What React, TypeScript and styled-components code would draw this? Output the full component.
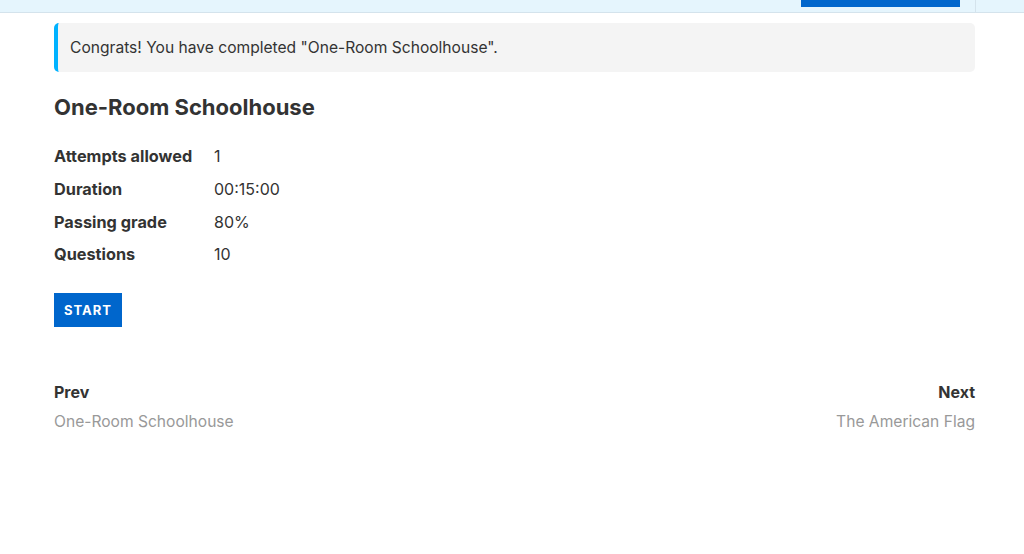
import React from 'react';
import styled, { createGlobalStyle } from 'styled-components';

const GlobalStyle = createGlobalStyle`
  body {
    margin: 0;
    background: #fff;
    font-family: Inter, "Noto Sans", sans-serif;
    color: #333;
  }
`;

const details = [
  { label: 'Attempts allowed', value: '1' },
  { label: 'Duration', value: '00:15:00' },
  { label: 'Passing grade', value: '80%' },
  { label: 'Questions', value: '10' },
];

export default function App() {
  return (
    <>
      <GlobalStyle />
      <TopBar>
        <TopButton />
        <Divider />
      </TopBar>
      <Main>
        <Notice>Congrats! You have completed "One-Room Schoolhouse".</Notice>
        <Title>One-Room Schoolhouse</Title>
        <InfoTable>
          {details.map((d) => (
            <React.Fragment key={d.label}>
              <Label>{d.label}</Label>
              <Value>{d.value}</Value>
            </React.Fragment>
          ))}
        </InfoTable>
        <StartButton>START</StartButton>
        <Nav>
          <NavItem align="left">
            <NavHead>Prev</NavHead>
            <NavLink>One-Room Schoolhouse</NavLink>
          </NavItem>
          <NavItem align="right">
            <NavHead>Next</NavHead>
            <NavLink>The American Flag</NavLink>
          </NavItem>
        </Nav>
      </Main>
    </>
  );
}

const TopBar = styled.header`
  height: 12px;
  background: #e5f5fd;
  border-bottom: 1px solid #d4e3ec;
  display: flex;
  justify-content: flex-end;
  align-items: flex-start;
`;

const TopButton = styled.div`
  width: 159px;
  height: 7px;
  background: #0066cc;
  margin-right: 15px;
`;

const Divider = styled.div`
  width: 1px;
  height: 12px;
  background: #d4e3ec;
  margin-right: 48px;
`;

const Main = styled.main`
  width: 921px;
  margin-left: 54px;
  padding-top: 10px;
`;

const Notice = styled.div`
  background: #f4f4f4;
  border-left: 4px solid #00b2ff;
  border-radius: 5px;
  padding: 0 12px;
  height: 49px;
  display: flex;
  align-items: center;
  font-size: 15.6px;
  color: #333;
`;

const Title = styled.h1`
  margin: 21px 0 0;
  font-size: 22px;
  line-height: 28px;
  font-weight: 700;
  color: #333;
`;

const InfoTable = styled.div`
  display: grid;
  grid-template-columns: 160px auto;
  grid-auto-rows: 32.7px;
  align-items: center;
  margin-top: 19px;
  font-size: 16px;
`;

const Label = styled.div`
  font-weight: 700;
  font-size: 16.3px;
  color: #333;
`;

const Value = styled.div`
  color: #333;
`;

const StartButton = styled.button`
  margin-top: 22px;
  height: 34px;
  width: 68px;
  padding: 0;
  border: none;
  background: #0066cc;
  color: #fff;
  font-family: Inter, sans-serif;
  font-size: 13px;
  font-weight: 700;
  letter-spacing: 1px;
  cursor: pointer;
`;

const Nav = styled.nav`
  display: flex;
  justify-content: space-between;
  margin-top: 55px;
`;

const NavItem = styled.div<{ align: 'left' | 'right' }>`
  display: flex;
  flex-direction: column;
  gap: 10px;
  text-align: ${(p) => p.align};
`;

const NavHead = styled.div`
  font-size: 16px;
  font-weight: 700;
  color: #333;
`;

const NavLink = styled.a`
  font-size: 15.6px;
  color: #999;
  cursor: pointer;
`;
